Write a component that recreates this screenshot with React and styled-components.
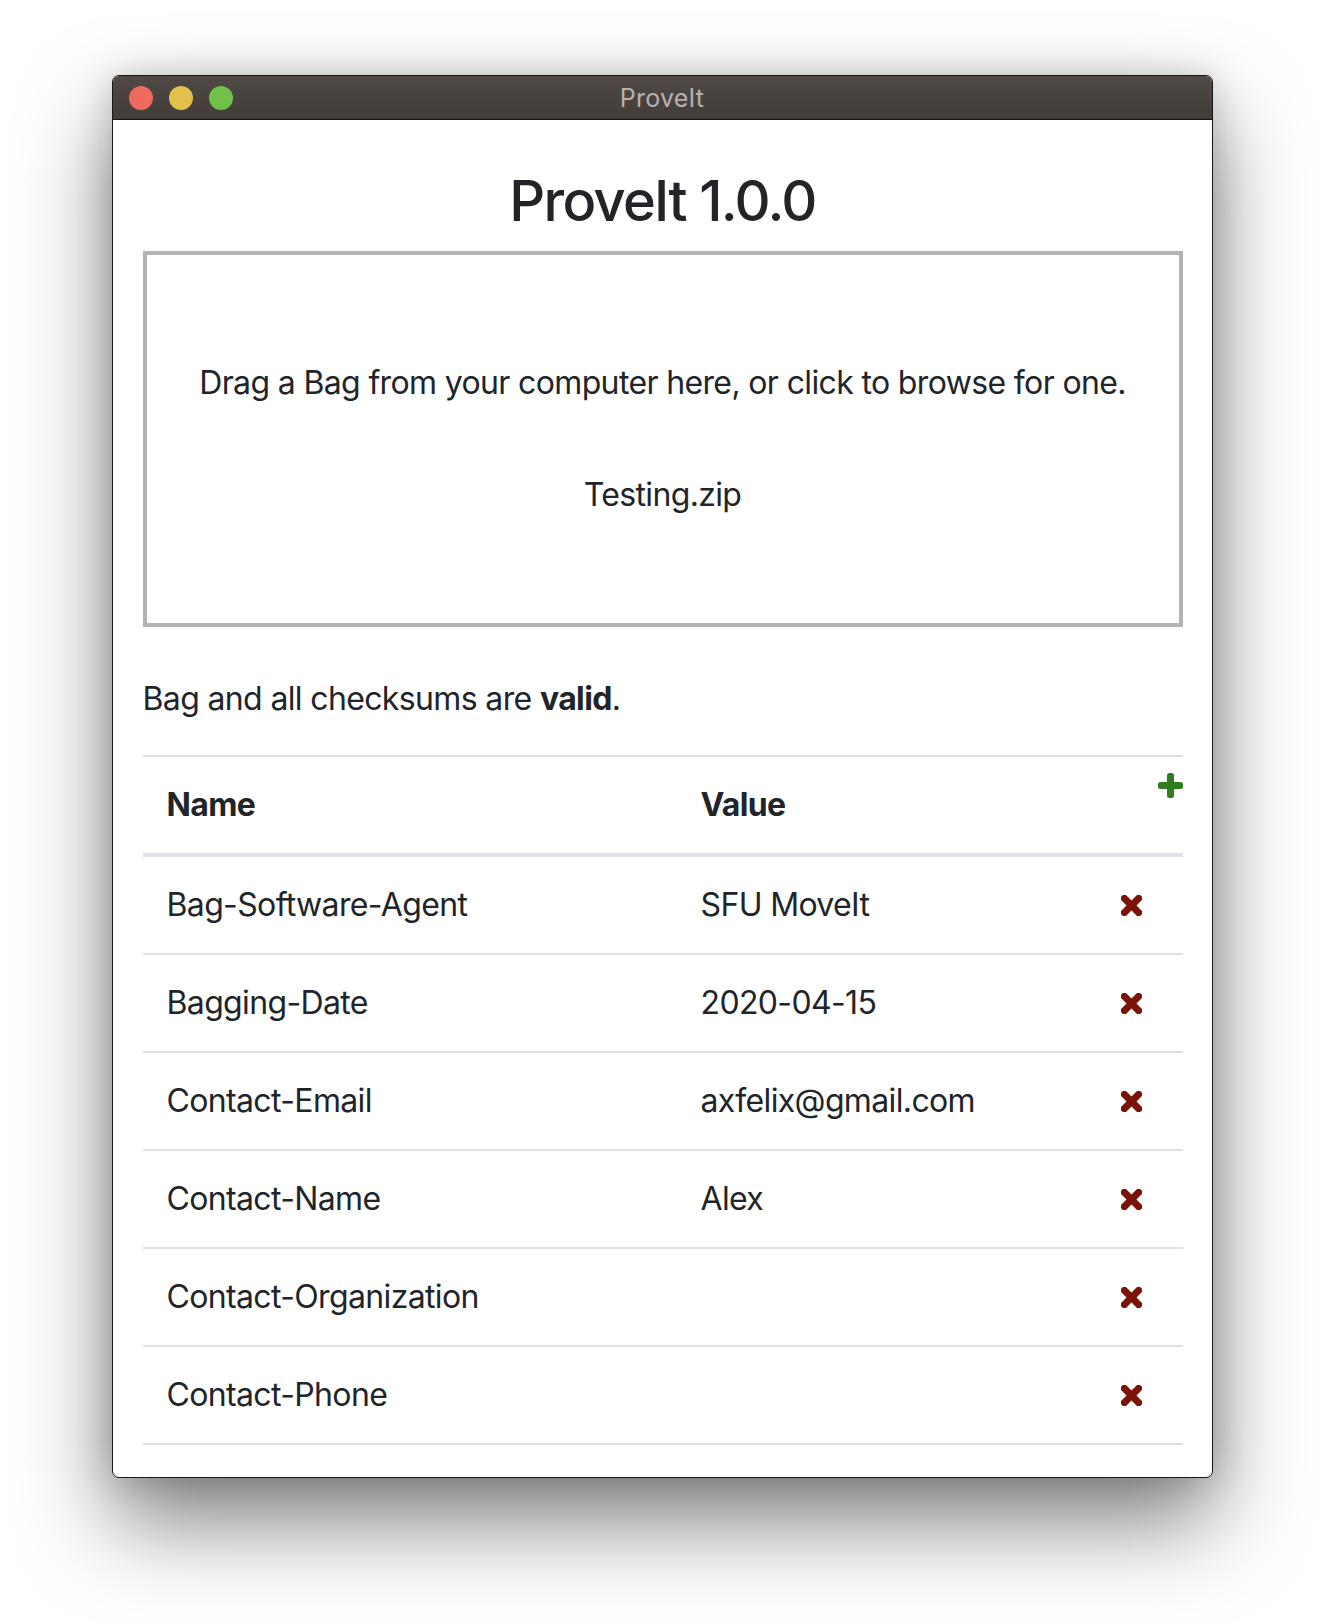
import React from "react";
import styled, { createGlobalStyle } from "styled-components";

const GlobalStyle = createGlobalStyle`
  html, body {
    margin: 0;
    padding: 0;
    background: #ffffff;
  }
  body {
    font-family: Inter, "Noto Sans", "Liberation Sans", sans-serif;
    color: #212529;
    -webkit-font-smoothing: antialiased;
  }
`;

// bag-info 태그 목록
const tags = [
  { name: "Bag-Software-Agent", value: "SFU MoveIt" },
  { name: "Bagging-Date", value: "2020-04-15" },
  { name: "Contact-Email", value: "axfelix@gmail.com" },
  { name: "Contact-Name", value: "Alex" },
  { name: "Contact-Organization", value: "" },
  { name: "Contact-Phone", value: "" },
];

const Page = styled.div`
  padding: 75px 0 148px;
`;

const Window = styled.div`
  width: 1099px;
  margin: 0 auto;
  border: 1px solid #161616;
  border-radius: 7px;
  overflow: hidden;
  background: #ffffff;
  box-shadow: 0 44px 90px rgba(0, 0, 0, 0.5), 0 0 36px rgba(0, 0, 0, 0.18);
`;

const TitleBar = styled.div`
  position: relative;
  height: 43px;
  display: flex;
  align-items: center;
  justify-content: center;
  background: linear-gradient(#4f4845, #433d3a);
  border-bottom: 1px solid #141212;
`;

const Lights = styled.div`
  position: absolute;
  left: 16px;
  top: 10px;
  display: flex;
  gap: 16px;
`;

const Light = styled.span`
  width: 24px;
  height: 24px;
  border-radius: 50%;
  background: ${(p) => p.color};
`;

const WindowTitle = styled.span`
  font-size: 25px;
  color: #b7b1ae;
  letter-spacing: 0.2px;
`;

const Content = styled.div`
  padding: 48px 29px 32px 30px;
  letter-spacing: -0.04em;
`;

const Heading = styled.h3`
  margin: 0 0 16px;
  font-size: 56px;
  line-height: 1.2;
  font-weight: 500;
  text-align: center;
  letter-spacing: -0.03em;
`;

const DropZone = styled.div`
  height: 368px;
  border: 4px solid #b3b3b3;
  display: flex;
  flex-direction: column;
  align-items: center;
  justify-content: center;
  gap: 64px;
  cursor: pointer;
`;

const DropText = styled.p`
  margin: 0;
  font-size: 32px;
  line-height: 48px;
`;

const Status = styled.p`
  margin: 48px 0 32px;
  font-size: 32px;
  line-height: 48px;
`;

const Table = styled.div`
  border-top: 2px solid #dee2e6;
`;

const Row = styled.div`
  display: grid;
  grid-template-columns: 534px 1fr 86px;
  border-bottom: ${(p) => (p.head ? "4px" : "2px")} solid #dee2e6;
`;

const Cell = styled.div`
  padding: 24px;
  font-size: 32px;
  line-height: 48px;
  font-weight: ${(p) => (p.head ? 700 : 400)};
  white-space: nowrap;
`;

const ActionCell = styled.div`
  display: flex;
  align-items: ${(p) => (p.head ? "flex-start" : "center")};
  justify-content: ${(p) => (p.head ? "flex-end" : "flex-start")};
  padding: ${(p) => (p.head ? "16px 0 0 0" : "0 0 0 24px")};
`;

const IconButton = styled.button`
  border: 0;
  padding: 0;
  background: none;
  display: flex;
  cursor: pointer;
`;

const PlusIcon = () => (
  <svg width="25" height="25" viewBox="0 0 25 25">
    <rect x="9" y="0" width="7" height="25" rx="2.5" fill="#2f7d1f" />
    <rect x="0" y="9" width="25" height="7" rx="2.5" fill="#2f7d1f" />
  </svg>
);

const TimesIcon = () => (
  <svg width="21" height="21" viewBox="0 0 21 21">
    <g transform="rotate(45 10.5 10.5)" fill="#7a1308">
      <rect x="7" y="-3" width="7" height="27" rx="2.2" />
      <rect x="-3" y="7" width="27" height="7" rx="2.2" />
    </g>
  </svg>
);

const App = () => {
  return (
    <Page>
      <GlobalStyle />
      <Window>
        <TitleBar>
          <Lights>
            <Light color="#ee6a5f" />
            <Light color="#e2c04b" />
            <Light color="#70c04a" />
          </Lights>
          <WindowTitle>ProveIt</WindowTitle>
        </TitleBar>
        <Content>
          <Heading>ProveIt 1.0.0</Heading>
          <DropZone>
            <DropText>
              Drag a Bag from your computer here, or click to browse for one.
            </DropText>
            <DropText>Testing.zip</DropText>
          </DropZone>
          <Status>
            Bag and all checksums are <b>valid</b>.
          </Status>
          <Table>
            <Row head>
              <Cell head>Name</Cell>
              <Cell head>Value</Cell>
              <ActionCell head>
                <IconButton title="Add tag">
                  <PlusIcon />
                </IconButton>
              </ActionCell>
            </Row>
            {tags.map((tag) => (
              <Row key={tag.name}>
                <Cell>{tag.name}</Cell>
                <Cell>{tag.value}</Cell>
                <ActionCell>
                  <IconButton title="Remove tag">
                    <TimesIcon />
                  </IconButton>
                </ActionCell>
              </Row>
            ))}
          </Table>
        </Content>
      </Window>
    </Page>
  );
};

export default App;
